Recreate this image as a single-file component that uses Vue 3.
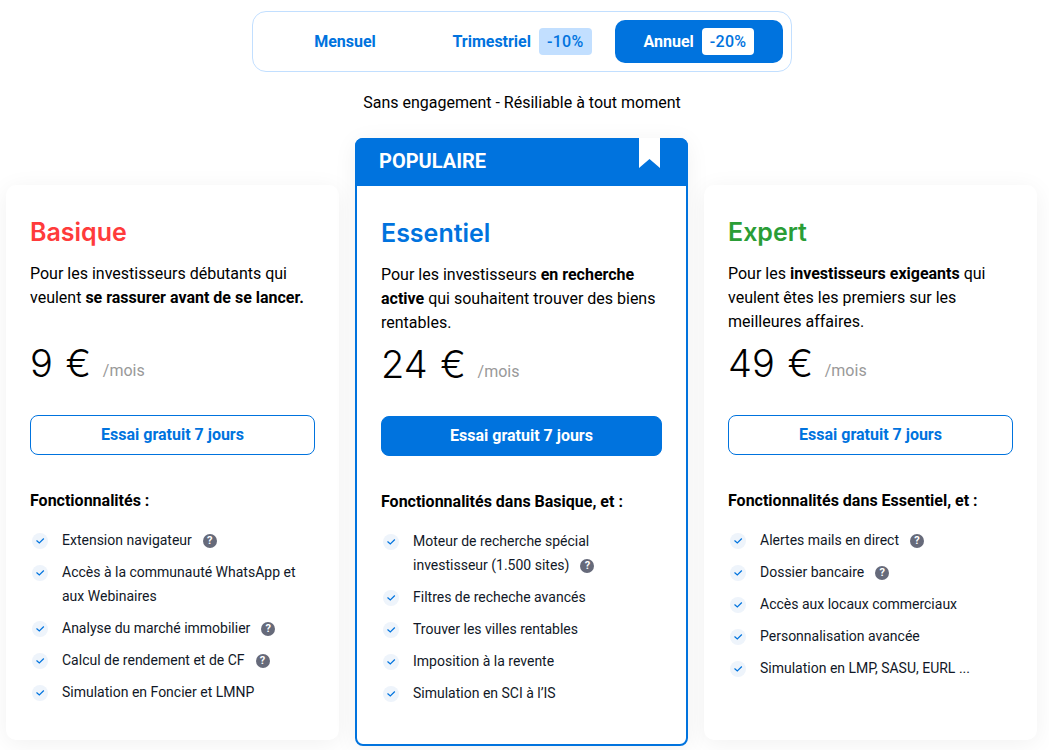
<script setup>
const plans = [
  {
    id: 'basic', name: 'Basique', price: '9 €',
    desc: ['Pour les investisseurs débutants qui veulent ', { b: 'se rassurer avant de se lancer.' }],
    heading: 'Fonctionnalités :',
    features: [
      { text: 'Extension navigateur', help: true },
      { text: 'Accès à la communauté WhatsApp et aux Webinaires' },
      { text: 'Analyse du marché immobilier', help: true },
      { text: 'Calcul de rendement et de CF', help: true },
      { text: 'Simulation en Foncier et LMNP' },
    ],
  },
  {
    id: 'essential', name: 'Essentiel', price: '24 €', popular: true,
    desc: ['Pour les investisseurs ', { b: 'en recherche active' }, ' qui souhaitent trouver des biens rentables.'],
    heading: 'Fonctionnalités dans Basique, et :',
    features: [
      { text: 'Moteur de recherche spécial investisseur (1.500 sites)', help: true },
      { text: 'Filtres de recheche avancés' },
      { text: 'Trouver les villes rentables' },
      { text: 'Imposition à la revente' },
      { text: 'Simulation en SCI à l’IS' },
    ],
  },
  {
    id: 'expert', name: 'Expert', price: '49 €',
    desc: ['Pour les ', { b: 'investisseurs exigeants' }, ' qui veulent êtes les premiers sur les meilleures affaires.'],
    heading: 'Fonctionnalités dans Essentiel, et :',
    features: [
      { text: 'Alertes mails en direct', help: true },
      { text: 'Dossier bancaire', help: true },
      { text: 'Accès aux locaux commerciaux' },
      { text: 'Personnalisation avancée' },
      { text: 'Simulation en LMP, SASU, EURL ...' },
    ],
  },
]
</script>

<template>
  <div class="page">
    <div class="switch">
      <button class="tab">Mensuel</button>
      <button class="tab">Trimestriel <span class="off">-10%</span></button>
      <button class="tab tab--on">Annuel <span class="off off--on">-20%</span></button>
    </div>
    <p class="note">Sans engagement - Résiliable à tout moment</p>

    <div class="plans">
      <section v-for="p in plans" :key="p.id" :class="['card', 'card--' + p.id]">
        <header v-if="p.popular" class="ribbon">
          POPULAIRE
          <svg class="mark" width="21" height="30" viewBox="0 0 21 30"><path d="M0 0h21v30l-10.500-9L0 30z" fill="#fff" /></svg>
        </header>
        <div class="body">
          <h2 class="name">{{ p.name }}</h2>
          <p class="desc">
            <template v-for="(d, i) in p.desc" :key="i">
              <b v-if="d.b">{{ d.b }}</b>
              <template v-else>{{ d }}</template>
            </template>
          </p>
          <div class="price">{{ p.price }} <span class="per">/mois</span></div>
          <button :class="['cta', { 'cta--fill': p.popular }]">Essai gratuit 7 jours</button>
          <h3 class="heading">{{ p.heading }}</h3>
          <ul class="list">
            <li v-for="f in p.features" :key="f.text">
              <span class="tick">
                <svg width="10" height="8" viewBox="0 0 10 8"><path d="M1.500 3.500 4.300 6 8.800 1.500" fill="none" stroke="#0073de" stroke-width="1.200" /></svg>
              </span>
              <span class="txt">{{ f.text }}<span v-if="f.help" class="help">?</span></span>
            </li>
          </ul>
        </div>
      </section>
    </div>
  </div>
</template>

<style>
html, body { background: #fff; }
</style>

<style scoped>
.page {
  width: 1049px; height: 750px; overflow: hidden; box-sizing: border-box;
  padding: 11px 5px 0 0; font-family: Roboto, sans-serif; color: #000;
  display: flex; flex-direction: column; align-items: center;
}
.switch {
  width: 540px; height: 61px; box-sizing: border-box;
  border: 1px solid #c2dfff; border-radius: 14px; background: #fff;
  display: grid; grid-template-columns: 1fr 1fr 1fr; gap: 9px; padding: 8px;
}
.tab {
  border: 0; background: none; color: #0073de; border-radius: 10px;
  font: 700 16px Roboto, sans-serif; display: flex; align-items: center; justify-content: center; gap: 8px;
  padding: 0;
}
.tab--on { background: #0073de; color: #fff; }
.off {
  background: #c2dfff; color: #0073de; border-radius: 4px; padding: 0 8px;
  height: 27px; line-height: 27px; font-weight: 500; letter-spacing: .3px;
}
.off--on { background: #fff; }
.note { margin: 19px 0 0; font-size: 16px; line-height: 24px; }

.plans {
  margin-top: 23px; width: 100%; box-sizing: border-box; padding-left: 6px;
  display: grid; grid-template-columns: repeat(3, 333px); column-gap: 16px; align-items: start;
}
.card {
  background: #fff; border-radius: 10px; box-shadow: 0 4px 24px rgba(0,0,0,.06);
  margin-top: 47px; height: 555px; box-sizing: border-box;
}
.card--essential {
  margin-top: 0; height: 608px; border: 2px solid #0073de; border-radius: 8px;
}
.ribbon {
  margin: -2px -2px 0; padding: 0 24px; background: #0073de; color: #fff;
  border-radius: 8px 8px 0 0; font-size: 20px; font-weight: 700;
  position: relative; height: 48px; line-height: 46px;
}
.mark { position: absolute; top: 0; right: 28px; }
.body { padding: 30px 24px 0; }
.name { margin: 0; font: 600 25px/34px Inter, sans-serif; }
.card--basic .name { color: #ff3b3b; }
.card--essential .name { color: #0073de; }
.card--expert .name { color: #2a9d36; }
.desc { margin: 13px 0 0; font-size: 16px; line-height: 24px; min-height: 72px; }
.desc b { font-weight: 700; }
.price { margin-top: 4px; font: 300 38px/50px Inter, sans-serif; word-spacing: 2px; }
.per { font: 400 16px Roboto, sans-serif; color: #999; margin-left: -1px; vertical-align: 1px; }
.cta {
  display: block; width: 100%; height: 40px; margin-top: 27px; box-sizing: border-box;
  border: 1px solid #0073de; border-radius: 8px; background: #fff; color: #0073de;
  font: 700 16px Roboto, sans-serif; padding: 0 0 2px;
}
.cta--fill { background: #0073de; color: #fff; }
.heading { margin: 36px 0 0; font-size: 16px; line-height: 20px; font-weight: 700; }
.list { list-style: none; margin: 17px 0 0; padding: 0; color: #111827; }
.list li { display: flex; gap: 14px; font-size: 14px; line-height: 24px; margin-bottom: 8px; }
.tick {
  flex: none; width: 16px; height: 16px; margin: 5px 0 0 2px; border-radius: 50%; background: #eef4fb;
  display: flex; align-items: center; justify-content: center;
}
.help {
  display: inline-block; width: 14px; height: 14px; line-height: 14px; border-radius: 50%;
  background: #666a7a; color: #fff; font-size: 11px; font-weight: 700; text-align: center;
  margin-left: 11px; vertical-align: 1px;
}
</style>
